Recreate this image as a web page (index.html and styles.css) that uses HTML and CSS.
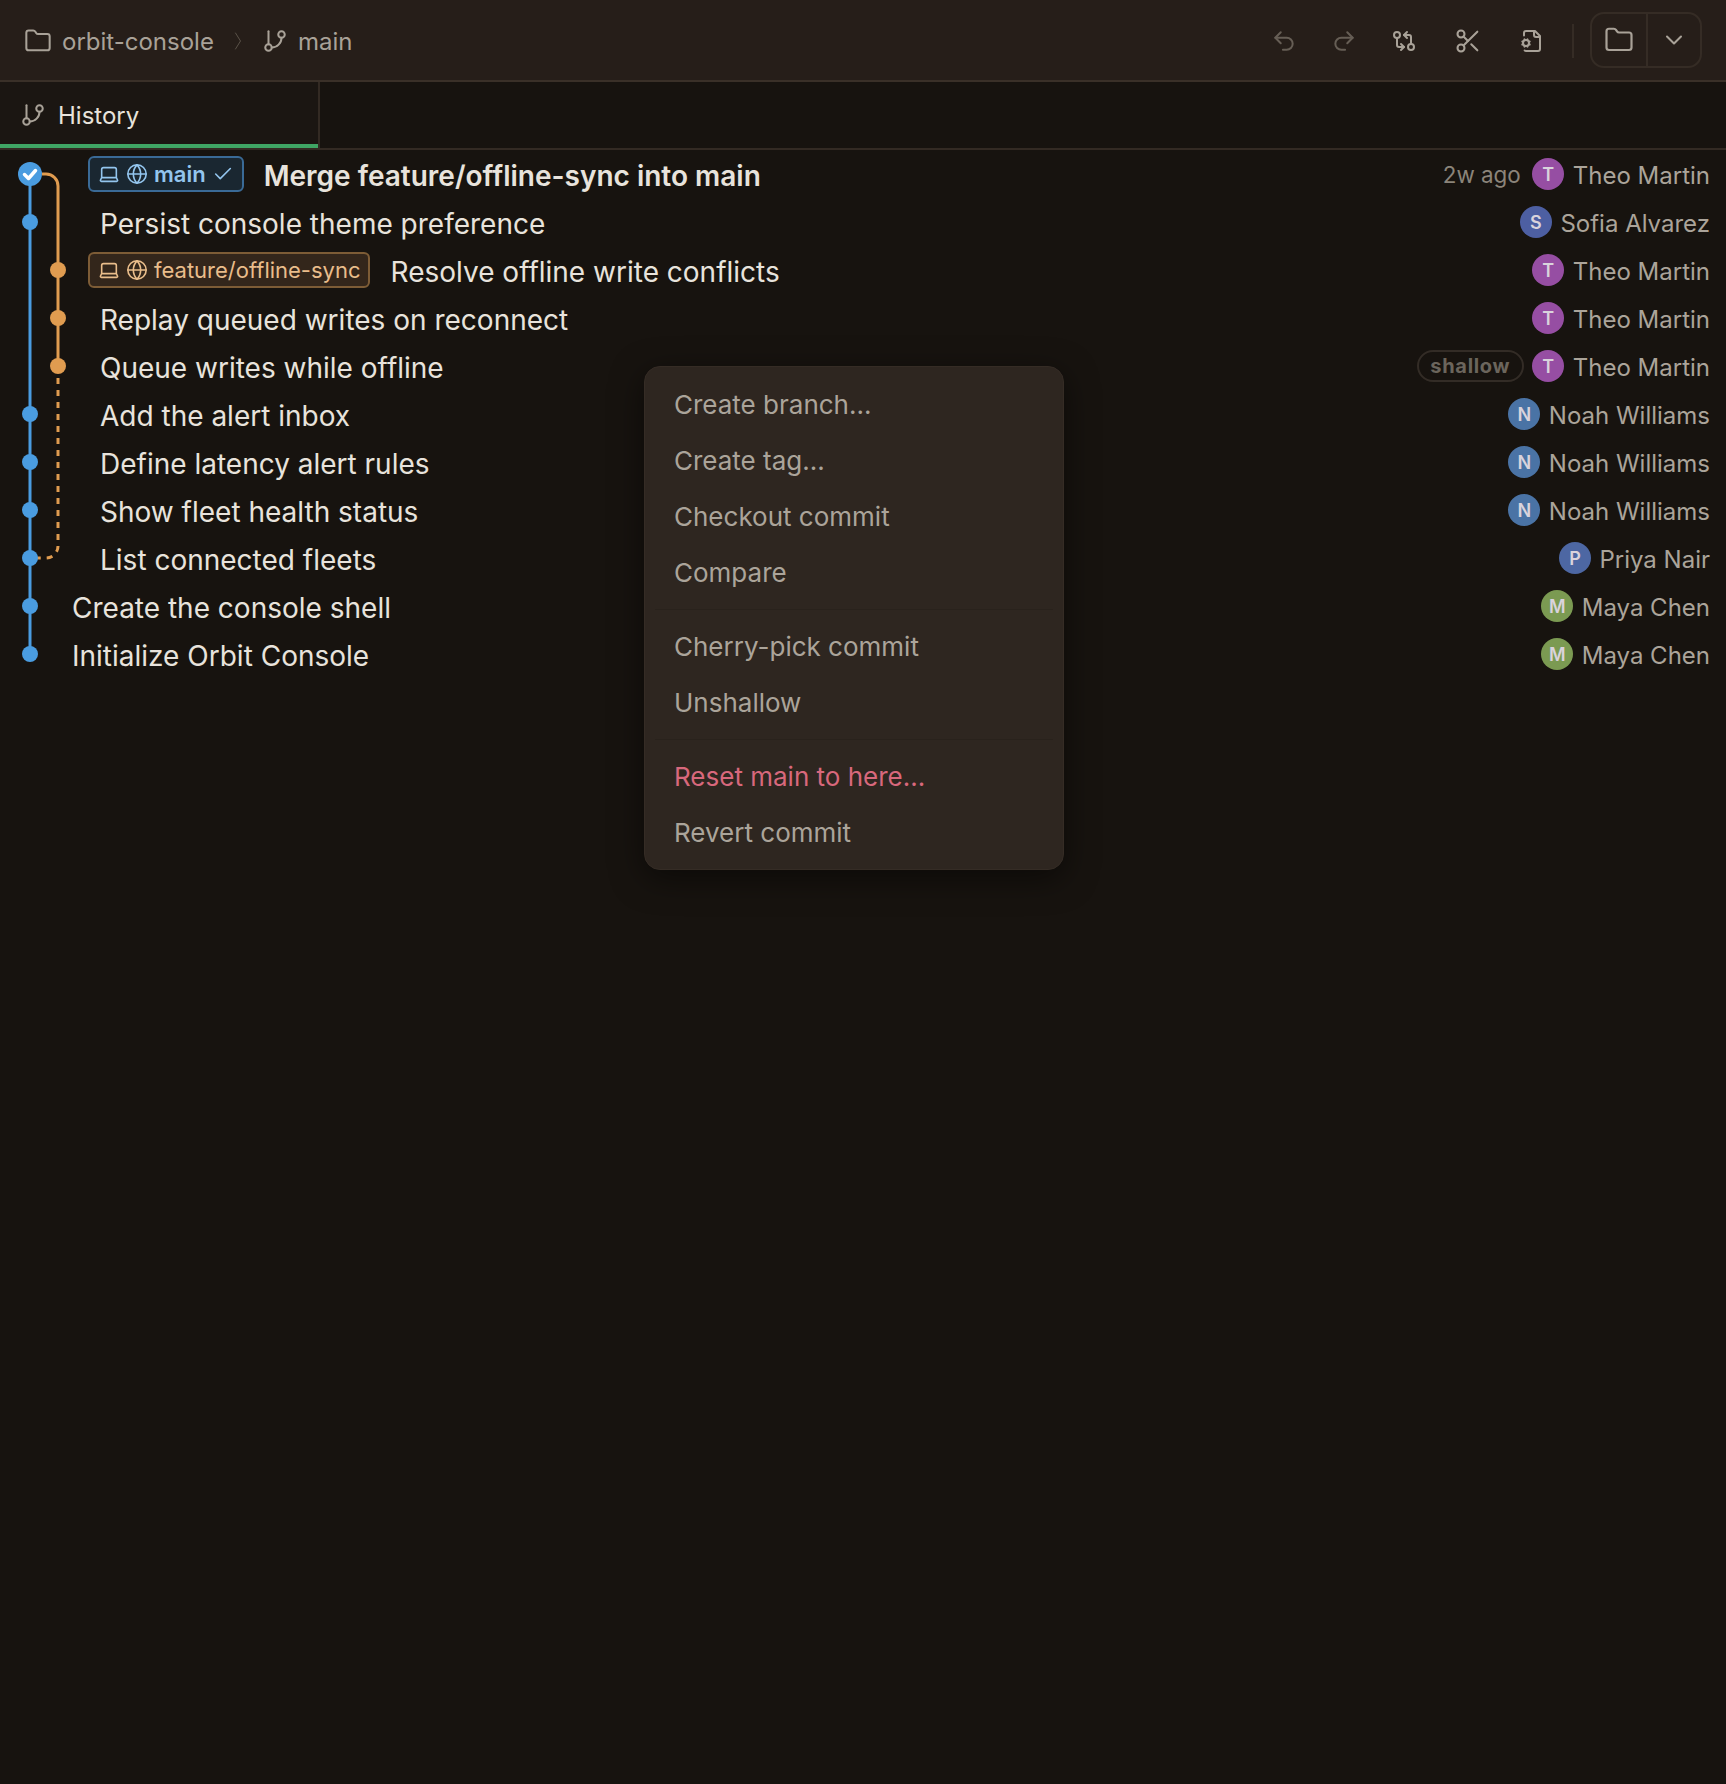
FILE: index.html
```html
<!DOCTYPE html>
<html lang="en">
<head>
<meta charset="utf-8">
<title>orbit-console</title>
<link rel="stylesheet" href="styles.css">
</head>
<body>
<svg class="defs" width="0" height="0" aria-hidden="true">
  <defs>
    <symbol id="i-folder" viewBox="0 0 24 24"><path d="M20 20a2 2 0 0 0 2-2V8a2 2 0 0 0-2-2h-7.9a2 2 0 0 1-1.69-.9L9.6 3.9A2 2 0 0 0 7.93 3H4a2 2 0 0 0-2 2v13a2 2 0 0 0 2 2Z"/></symbol>
    <symbol id="i-branch" viewBox="0 0 24 24"><line x1="6" y1="3" x2="6" y2="15"/><circle cx="18" cy="6" r="3"/><circle cx="6" cy="18" r="3"/><path d="M18 9a9 9 0 0 1-9 9"/></symbol>
    <symbol id="i-crumb-sep" viewBox="0 0 8 20"><path d="M1.5 2 6.5 10 1.5 18"/></symbol>
    <symbol id="i-chevron-down" viewBox="0 0 24 24"><path d="m6 9 6 6 6-6"/></symbol>
    <symbol id="i-undo" viewBox="0 0 24 24"><path d="M9 14 4 9l5-5"/><path d="M4 9h10.5a5.5 5.5 0 0 1 5.5 5.5a5.5 5.5 0 0 1-5.5 5.5H11"/></symbol>
    <symbol id="i-redo" viewBox="0 0 24 24"><path d="m15 14 5-5-5-5"/><path d="M20 9H9.5A5.5 5.5 0 0 0 4 14.5A5.5 5.5 0 0 0 9.5 20H13"/></symbol>
    <symbol id="i-compare" viewBox="0 0 24 24"><circle cx="5" cy="6" r="3"/><path d="M12 6h5a2 2 0 0 1 2 2v7"/><path d="m15 9-3-3 3-3"/><circle cx="19" cy="18" r="3"/><path d="M12 18H7a2 2 0 0 1-2-2V9"/><path d="m9 15 3 3-3 3"/></symbol>
    <symbol id="i-scissors" viewBox="0 0 24 24"><circle cx="6" cy="6" r="3"/><path d="M8.12 8.12 12 12"/><path d="M20 4 8.12 15.88"/><circle cx="6" cy="18" r="3"/><path d="M14.8 14.8 20 20"/></symbol>
    <symbol id="i-file-cog" viewBox="0 0 24 24"><path d="M14 2v4a2 2 0 0 0 2 2h4"/><path d="m3.2 12.9-.9-.4"/><path d="m3.2 15.1-.9.4"/><path d="M4.677 21.5a2 2 0 0 0 1.313.5H18a2 2 0 0 0 2-2V7l-5-5H6a2 2 0 0 0-2 2v2.5"/><path d="m4.9 11.2-.4-.9"/><path d="m4.9 16.8-.4.9"/><path d="m7.5 10.3-.4.9"/><path d="m7.5 17.7-.4-.9"/><path d="m9.7 12.5-.9.4"/><path d="m9.7 15.5-.9-.4"/><circle cx="6" cy="14" r="3"/></symbol>
    <symbol id="i-laptop" viewBox="0 0 24 24"><path d="M20 16V7a2 2 0 0 0-2-2H6a2 2 0 0 0-2 2v9m16 0H4m16 0 1.28 2.55a1 1 0 0 1-.9 1.45H3.62a1 1 0 0 1-.9-1.45L4 16"/></symbol>
    <symbol id="i-globe" viewBox="0 0 24 24"><circle cx="12" cy="12" r="10"/><path d="M12 2a14.5 14.5 0 0 0 0 20 14.5 14.5 0 0 0 0-20"/><path d="M2 12h20"/></symbol>
    <symbol id="i-check" viewBox="0 0 24 24"><path d="M20 6 9 17l-5-5"/></symbol>
  </defs>
</svg>

<header class="topbar">
  <div class="crumbs">
    <svg class="icon s28"><use href="#i-folder"/></svg>
    <span class="crumb">orbit-console</span>
    <svg class="icon sep-chevron"><use href="#i-crumb-sep"/></svg>
    <svg class="icon s26 branch-crumb"><use href="#i-branch"/></svg>
    <span class="crumb">main</span>
  </div>
  <div class="tools">
    <svg class="icon s26 tool dim"><use href="#i-undo"/></svg>
    <svg class="icon s26 tool dim redo"><use href="#i-redo"/></svg>
    <svg class="icon s24 tool wide"><use href="#i-compare"/></svg>
    <svg class="icon s28 tool wide"><use href="#i-scissors"/></svg>
    <svg class="icon s24 tool last"><use href="#i-file-cog"/></svg>
    <span class="tool-divider"></span>
    <div class="split">
      <span class="split-main"><svg class="icon s30"><use href="#i-folder"/></svg></span>
      <span class="split-side"><svg class="icon s28"><use href="#i-chevron-down"/></svg></span>
    </div>
  </div>
</header>

<nav class="tabbar">
  <div class="tab">
    <svg class="icon s26"><use href="#i-branch"/></svg>
    <span>History</span>
  </div>
</nav>

<main class="history">
  <svg class="graph" width="80" height="520" viewBox="0 150 80 520" aria-hidden="true">
    <path class="line-main" d="M30 174V654"/>
    <path class="line-side" d="M42 174H46a12 12 0 0 1 12 12V366"/>
    <path class="line-side dashed" d="M58 378V546a12 12 0 0 1-12 12H34"/>
    <g class="dots-main">
      <circle cx="30" cy="222" r="8"/><circle cx="30" cy="414" r="8"/><circle cx="30" cy="462" r="8"/><circle cx="30" cy="510" r="8"/><circle cx="30" cy="558" r="8"/><circle cx="30" cy="606" r="8"/><circle cx="30" cy="654" r="8"/>
    </g>
    <g class="dots-side">
      <circle cx="58" cy="270" r="8"/><circle cx="58" cy="318" r="8"/><circle cx="58" cy="366" r="8"/>
    </g>
    <circle class="head" cx="30" cy="174" r="12"/>
    <path class="head-check" d="M24.5 174.5l4 4 7-8"/>
  </svg>

  <div class="row badged">
    <span class="badge badge-main">
      <svg class="icon s22"><use href="#i-laptop"/></svg>
      <svg class="icon s22"><use href="#i-globe"/></svg>
      <span class="badge-name strong">main</span>
      <svg class="icon s22"><use href="#i-check"/></svg>
    </span>
    <span class="title strong">Merge feature/offline-sync into main</span>
    <span class="meta"><span class="date">2w ago</span><span class="avatar theo">T</span><span class="author">Theo Martin</span></span>
  </div>
  <div class="row indented">
    <span class="title">Persist console theme preference</span>
    <span class="meta"><span class="avatar sofia">S</span><span class="author">Sofia Alvarez</span></span>
  </div>
  <div class="row badged">
    <span class="badge badge-side">
      <svg class="icon s22"><use href="#i-laptop"/></svg>
      <svg class="icon s22"><use href="#i-globe"/></svg>
      <span class="badge-name">feature/offline-sync</span>
    </span>
    <span class="title">Resolve offline write conflicts</span>
    <span class="meta"><span class="avatar theo">T</span><span class="author">Theo Martin</span></span>
  </div>
  <div class="row indented">
    <span class="title">Replay queued writes on reconnect</span>
    <span class="meta"><span class="avatar theo">T</span><span class="author">Theo Martin</span></span>
  </div>
  <div class="row indented">
    <span class="title">Queue writes while offline</span>
    <span class="meta"><span class="pill">shallow</span><span class="avatar theo">T</span><span class="author">Theo Martin</span></span>
  </div>
  <div class="row indented">
    <span class="title">Add the alert inbox</span>
    <span class="meta"><span class="avatar noah">N</span><span class="author">Noah Williams</span></span>
  </div>
  <div class="row indented">
    <span class="title">Define latency alert rules</span>
    <span class="meta"><span class="avatar noah">N</span><span class="author">Noah Williams</span></span>
  </div>
  <div class="row indented">
    <span class="title">Show fleet health status</span>
    <span class="meta"><span class="avatar noah">N</span><span class="author">Noah Williams</span></span>
  </div>
  <div class="row indented">
    <span class="title">List connected fleets</span>
    <span class="meta"><span class="avatar priya">P</span><span class="author">Priya Nair</span></span>
  </div>
  <div class="row plain">
    <span class="title">Create the console shell</span>
    <span class="meta"><span class="avatar maya">M</span><span class="author">Maya Chen</span></span>
  </div>
  <div class="row plain">
    <span class="title">Initialize Orbit Console</span>
    <span class="meta"><span class="avatar maya">M</span><span class="author">Maya Chen</span></span>
  </div>
</main>

<div class="menu" role="menu">
  <div class="item">Create branch...</div>
  <div class="item">Create tag...</div>
  <div class="item">Checkout commit</div>
  <div class="item">Compare</div>
  <div class="rule"></div>
  <div class="item">Cherry-pick commit</div>
  <div class="item">Unshallow</div>
  <div class="rule"></div>
  <div class="item danger">Reset main to here...</div>
  <div class="item">Revert commit</div>
</div>
</body>
</html>
```
FILE: styles.css
```css
* { box-sizing: border-box; }
html, body { margin: 0; height: 100%; }
body {
  position: relative;
  width: 1726px;
  height: 1784px;
  overflow: hidden;
  background: #17130f;
  color: #e8e3dc;
  font-family: Inter, "Liberation Sans", sans-serif;
}
.defs { position: absolute; }
.icon {
  display: block;
  flex: none;
  fill: none;
  stroke: currentColor;
  stroke-width: 1.75;
  stroke-linecap: round;
  stroke-linejoin: round;
}
.s22 { width: 22px; height: 22px; }
.s24 { width: 24px; height: 24px; stroke-width: 2; }
.s26 { width: 26px; height: 26px; stroke-width: 1.85; }
.s28 { width: 28px; height: 28px; }
.s30 { width: 30px; height: 30px; }

.topbar {
  display: flex;
  align-items: center;
  justify-content: space-between;
  height: 82px;
  padding: 2px 24px 0 24px;
  background: #261e19;
  border-bottom: 2px solid #3a3028;
  color: #a9a298;
}
.crumbs { display: flex; align-items: center; }
.crumb { font-size: 24px; line-height: 32px; padding-top: 2px; }
.crumbs .s28 { margin-right: 10px; }
.sep-chevron { width: 8px; height: 20px; stroke-width: 1; color: #5a5248; margin: 0 20px 0 20px; }
.branch-crumb { margin-right: 10px; }
.tools { display: flex; align-items: center; }
.tool { margin-right: 34px; }
.tool.dim { color: #665e55; }
.tool.redo { margin-right: 35px; }
.tool.wide { margin-right: 38px; }
.tool.last { margin-right: 28px; }
.tool-divider { width: 2px; height: 34px; background: #352c25; margin-right: 16px; }
.split {
  display: flex;
  width: 112px;
  height: 56px;
  border: 2px solid #352c25;
  border-radius: 14px;
  margin-top: -2px;
}
.split-main, .split-side { display: flex; align-items: center; justify-content: center; }
.split-main { width: 56px; border-right: 2px solid #352c25; }
.split-side { flex: 1; }

.tabbar {
  display: flex;
  height: 68px;
  border-bottom: 2px solid #332a23;
}
.tab {
  display: flex;
  align-items: center;
  gap: 12px;
  width: 320px;
  height: 66px;
  padding: 0 0 0 20px;
  background: #1b1612;
  border-right: 2px solid #332a23;
  box-shadow: inset 0 -4px 0 #3fa564;
  color: #a9a298;
  font-size: 24px;
}
.tab span { color: #e8e3dc; }

.history { position: relative; }
.graph { position: absolute; left: 0; top: 0; }
.graph path { fill: none; }
.line-main { stroke: #4a9ce0; stroke-width: 3; }
.line-side { stroke: #e09c50; stroke-width: 3; }
.dashed { stroke-dasharray: 6 6; }
.dots-main circle, .head { fill: #4a9ce0; }
.dots-side circle { fill: #e09c50; }
.graph .head-check { stroke: #fff; stroke-width: 3.5; stroke-linecap: round; stroke-linejoin: round; }

.row {
  display: flex;
  align-items: center;
  height: 48px;
  padding-right: 16px;
  font-size: 28px;
}
.badged { padding-left: 88px; }
.indented { padding-left: 100px; }
.plain { padding-left: 72px; }
.title { color: #e8e3dc; white-space: nowrap; padding-top: 4px; }
.strong { font-weight: 600; }

.badge {
  display: flex;
  align-items: center;
  height: 36px;
  margin-right: 20px;
  padding: 0 8px;
  gap: 6px;
  border: 2px solid;
  border-radius: 6px;
  font-size: 22px;
  margin-top: -1px;
}
.badge-main { background: #1a2731; border-color: #3a6a96; color: #93c5ee; }
.badge-side { background: #33261b; border-color: #7d5c36; color: #e9bd8b; padding-right: 7px; margin-right: 21px; }

.meta {
  display: flex;
  align-items: center;
  gap: 8.5px;
  margin-left: auto;
}
.date { color: #8b847a; font-size: 22.4px; margin-right: 3px; padding-top: 1px; }
.author { color: #aba49a; font-size: 24px; padding-top: 2px; }
.avatar {
  display: flex;
  align-items: center;
  justify-content: center;
  width: 32px;
  height: 32px;
  border-radius: 50%;
  font-size: 18px;
  font-weight: 600;
  color: #d9d3dc;
}
.theo { background: #964ea3; }
.sofia { background: #4d5fa2; }
.noah { background: #4a73a5; }
.priya { background: #4d67a3; }
.maya { background: #7b9a52; }
.pill {
  display: flex;
  align-items: center;
  height: 32px;
  padding: 0 11.5px;
  border: 2px solid #332c26;
  border-radius: 16px;
  color: #6b655c;
  font-size: 20px;
  font-weight: 700;
  letter-spacing: 0.7px;
}

.menu {
  position: absolute;
  left: 644px;
  top: 366px;
  width: 420px;
  height: 504px;
  padding: 9px 10px;
  background: #2e2620;
  border: 1px solid #352c25;
  border-radius: 16px;
  box-shadow: 0 8px 32px rgba(0, 0, 0, 0.5);
  color: #aba49a;
  font-size: 26px;
}
.item {
  display: flex;
  align-items: center;
  height: 56px;
  padding-left: 19px;
}
.item.danger { color: #d8687c; }
.rule { height: 1px; margin: 9px 0 8px; background: #29221c; }
```
